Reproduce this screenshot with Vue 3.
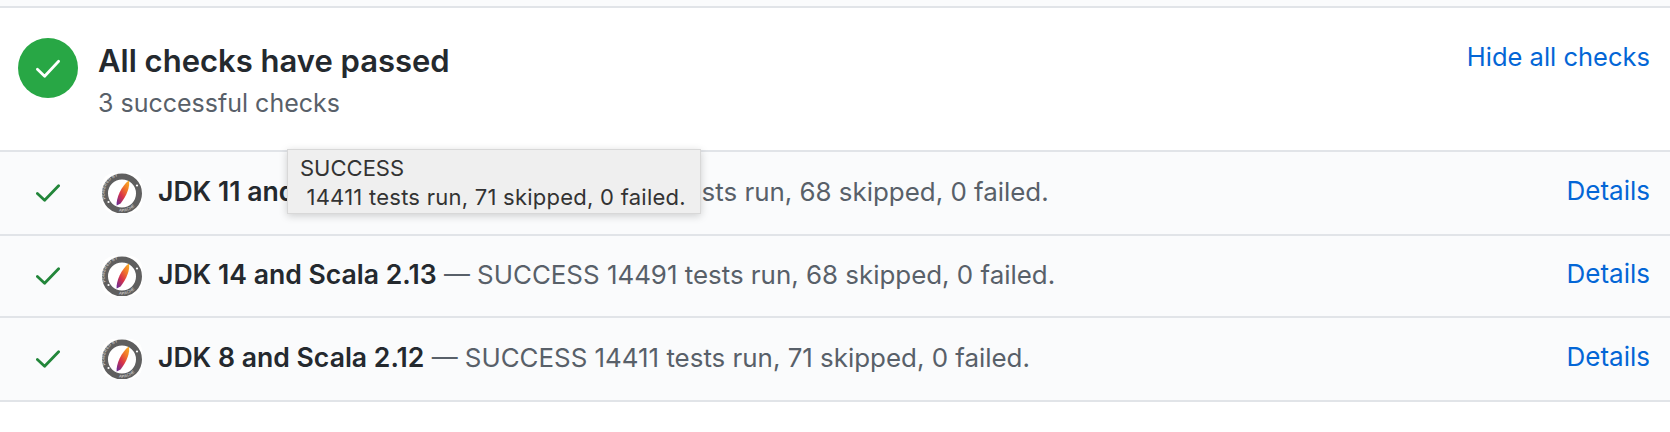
<script setup>
const rows = [
  { id: 'a', name: 'JDK 11 and Scala 2.13', desc: 'SUCCESS 14491 tests run, 68 skipped, 0 failed.' },
  { id: 'b', name: 'JDK 14 and Scala 2.13', desc: 'SUCCESS 14491 tests run, 68 skipped, 0 failed.' },
  { id: 'c', name: 'JDK 8 and Scala 2.12', desc: 'SUCCESS 14411 tests run, 71 skipped, 0 failed.' }
]
</script>

<template>
  <div class="page">
    <div class="topstrip"></div>
    <header class="head">
      <div class="badge">
        <svg viewBox="0 0 24 24" width="30" height="30" fill="none" stroke="#fff" stroke-width="2.2" stroke-linecap="round" stroke-linejoin="round">
          <path d="M3.5 13 L9.3 18.6 L20.5 6.6" />
        </svg>
      </div>
      <div class="titles">
        <div class="title">All checks have passed</div>
        <div class="sub">3 successful checks</div>
      </div>
      <a class="link hide">Hide all checks</a>
    </header>
    <div class="list">
      <div class="rows">
        <div v-for="r in rows" :key="r.id" class="row">
          <svg class="check" viewBox="0 0 24 18" width="24" height="18" fill="none" stroke="#22863a" stroke-width="2.8" stroke-linecap="round" stroke-linejoin="round">
            <path d="M1.4 9.5 L8.6 16.2 L22.6 1.8" />
          </svg>
          <svg class="logo" viewBox="0 0 40 40" width="40" height="40">
            <defs>
              <linearGradient :id="'feather-' + r.id" x1="0.85" y1="0" x2="0.15" y2="1">
                <stop offset="0" stop-color="#f9a825" />
                <stop offset="0.3" stop-color="#f0742a" />
                <stop offset="0.62" stop-color="#d8324a" />
                <stop offset="1" stop-color="#6f2c91" />
              </linearGradient>
              <path :id="'arc-top-' + r.id" d="M3.6 26 A17.4 17.4 0 0 1 33 8.6" />
              <path :id="'arc-bot-' + r.id" d="M17 38.4 A18.4 18.4 0 0 0 37.8 24" />
            </defs>
            <rect width="40" height="40" rx="12" fill="#fff" />
            <circle cx="20" cy="20.5" r="17" fill="none" stroke="#5f5f5f" stroke-width="6" />
            <text class="ring"><textPath :href="'#arc-top-' + r.id">POWERED BY</textPath></text>
            <text class="ring"><textPath :href="'#arc-bot-' + r.id">APACHE</textPath></text>
            <circle cx="35" cy="12.5" r="1.1" fill="#fff" />
            <circle cx="6.5" cy="29" r="1.1" fill="#fff" />
            <path d="M26.8 7.5 C28.6 13 24.5 23 18.6 30.5 L14.6 32.5 C14 25 19.5 13 26.8 7.5 Z" :fill="'url(#feather-' + r.id + ')'" />
          </svg>
          <div class="text"><strong class="name">{{ r.name }}</strong> <span class="dash">—</span> <span class="desc">{{ r.desc }}</span></div>
          <a class="link details">Details</a>
        </div>
      </div>
      <div class="tooltip">
        <div>SUCCESS</div>
        <div class="tip-line">&nbsp;14411 tests run, 71 skipped, 0 failed.</div>
      </div>
    </div>
  </div>
</template>

<style>
html, body { margin: 0; background: #fff; }
</style>

<style scoped>
.page {
  width: 1670px;
  height: 432px;
  overflow: hidden;
  background: #fff;
  font-family: Inter, "Liberation Sans", sans-serif;
}
.topstrip {
  height: 6px;
  background: #fafbfc;
  border-bottom: 2px solid #e1e4e8;
}
.head {
  height: 142px;
  display: flex;
  align-items: flex-start;
  padding: 0 20px 0 18px;
  background: #fff;
}
.badge {
  width: 60px;
  height: 60px;
  margin-top: 30px;
  border-radius: 50%;
  background: #28a745;
  display: flex;
  align-items: center;
  justify-content: center;
}
.titles { margin-left: 20px; flex: 1; }
.title {
  margin-top: 34px;
  font-size: 31px;
  line-height: 38px;
  font-weight: 600;
  color: #24292e;
}
.sub {
  margin-top: 8px;
  font-size: 25px;
  line-height: 30px;
  color: #586069;
}
.link {
  color: #0366d6;
  font-size: 25.5px;
  line-height: 30px;
}
.hide { margin-top: 34px; }
.details { font-size: 26px; margin-bottom: 4px; }
.list { position: relative; }
.row {
  height: 82px;
  display: flex;
  align-items: center;
  background: #fafbfc;
  border-top: 2px solid #e1e4e8;
  padding: 0 20px 0 36px;
}
.row:nth-child(2) { height: 80px; }
.row:last-child { border-bottom: 2px solid #e1e4e8; }
.check { flex: none; }
.logo { flex: none; margin-left: 42px; }
.ring {
  font-family: "Liberation Sans", sans-serif;
  font-size: 4px;
  font-weight: 400;
  fill: #e4e4e4;
  letter-spacing: 0.2px;
}
.text {
  flex: 1;
  margin-left: 16px;
  margin-bottom: 4px;
  font-size: 25.9px;
  line-height: 30px;
  color: #586069;
  white-space: nowrap;
}
.name { font-size: 26.6px; font-weight: 600; color: #24292e; }
.tooltip {
  position: absolute;
  left: 287px;
  top: -1px;
  width: 414px;
  height: 65px;
  padding: 4px 0 0 12px;
  box-sizing: border-box;
  background: #efefef;
  border: 1px solid #d8d8d8;
  box-shadow: 0 2px 8px rgba(0, 0, 0, 0.18);
  font-size: 22px;
  line-height: 29px;
  color: #333;
  white-space: nowrap;
}
.tip-line { letter-spacing: 0.25px; }
</style>
